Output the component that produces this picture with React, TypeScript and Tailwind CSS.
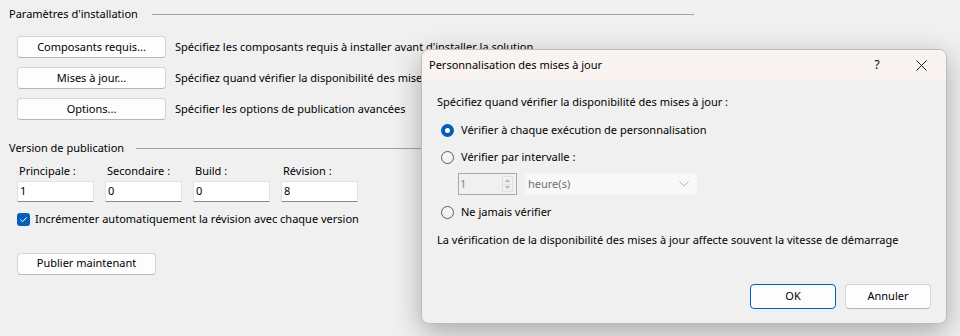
import React from 'react';

const font = { fontFamily: '"Segoe UI", "Noto Sans", "Open Sans", sans-serif' };

/**
 * 分组标题，带右侧横线
 */
function GroupHeader({ label, gap }: { label: string; gap: string }) {
  return (
    <div className="flex h-4 w-[685px] items-center">
      <span className="whitespace-nowrap">{label}</span>
      <div className={`h-px flex-1 bg-[#a3a3a3] ${gap}`}></div>
    </div>
  );
}

function WinButton({ label, width, accent = false }: { label: string; width: string; accent?: boolean }) {
  return (
    <button
      className={`flex h-[22px] ${width} items-center justify-center rounded-[4px] border bg-[#fdfdfd] ${
        accent ? 'border-[#005fb8]' : 'border-[#d4d4d4] border-b-[#b5b5b5]'
      }`}
    >
      {label}
    </button>
  );
}

function Radio({ checked }: { checked?: boolean }) {
  if (checked) {
    return (
      <span className="flex h-[13px] w-[13px] items-center justify-center rounded-full bg-[#005fb8]">
        <span className="h-[5px] w-[5px] rounded-full bg-white"></span>
      </span>
    );
  }
  return <span className="h-[13px] w-[13px] rounded-full border border-[#5d5d5d] bg-[#f3f3f3]"></span>;
}

export default function App() {
  const versions = [
    { label: 'Principale :', value: '1' },
    { label: 'Secondaire :', value: '0' },
    { label: 'Build :', value: '0' },
    { label: 'Révision :', value: '8' },
  ];

  const actions = [
    { label: 'Composants requis...', text: "Spécifiez les composants requis à installer avant d'installer la solution" },
    { label: 'Mises à jour...', text: 'Spécifiez quand vérifier la disponibilité des mises à jour' },
    { label: 'Options...', text: 'Spécifier les options de publication avancées' },
  ];

  return (
    <div className="relative h-[336px] w-[960px] overflow-hidden bg-[#f0f0f0] text-[11px] text-black" style={font}>
      {/* 背景页面 */}
      <div className="flex flex-col pl-[9px] pt-[6px]">
        <GroupHeader label="Paramètres d'installation" gap="ml-[14px]" />
        <div className="mt-[14px] flex flex-col gap-[9px] pl-[8px]">
          {actions.map((a) => (
            <div key={a.label} className="flex items-center">
              <WinButton label={a.label} width="w-[149px]" />
              <span className="ml-[9px] whitespace-nowrap">{a.text}</span>
            </div>
          ))}
        </div>

        <div className="mt-[20px]">
          <GroupHeader label="Version de publication" gap="ml-[12px]" />
        </div>
        <div className="mt-[7px] grid w-fit grid-cols-[77px_77px_77px_77px] gap-x-[11px] pl-[8px]">
          {versions.map((v) => (
            <div key={v.label} className="flex flex-col">
              <span className="h-4 pl-[2px] leading-4">{v.label}</span>
              <div className="mt-[2px] flex h-[21px] items-center border border-[#e3e3e3] border-b-[#8a8a8a] bg-white pl-[2px]">
                {v.value}
              </div>
            </div>
          ))}
        </div>
        <div className="mt-[9px] flex items-center pl-[8px]">
          <span className="flex h-[13px] w-[13px] items-center justify-center rounded-[3px] bg-[#005fb8]">
            <svg width="9" height="9" viewBox="0 0 9 9" fill="none">
              <path d="M1.5 4.7 L3.6 6.7 L7.6 2.4" stroke="white" strokeWidth="1" />
            </svg>
          </span>
          <span className="ml-[5px]">Incrémenter automatiquement la révision avec chaque version</span>
        </div>
        <div className="mt-[25px] pl-[8px]">
          <WinButton label="Publier maintenant" width="w-[139px]" />
        </div>
      </div>

      {/* 对话框 */}
      <div className="absolute left-[421px] top-[49px] flex h-[275px] w-[526px] flex-col overflow-hidden rounded-[8px] border border-[#bcbcbc] bg-[#f0f0f0] shadow-[0_8px_28px_rgba(0,0,0,0.3)]">
        <div className="flex h-[30px] items-center bg-[#f9f3f1] pl-[7px]">
          <span className="flex-1">Personnalisation des mises à jour</span>
          <span className="w-[10px] text-center text-[12px]">?</span>
          <svg className="ml-[34px] mr-[19px]" width="11" height="11" viewBox="0 0 11 11">
            <path d="M0.5 0.5 L10.5 10.5 M10.5 0.5 L0.5 10.5" stroke="#1a1a1a" strokeWidth="1" />
          </svg>
        </div>
        <div className="flex flex-1 flex-col pl-[15px] pr-[15px] pt-[14px]">
          <span className="h-4 leading-4">Spécifiez quand vérifier la disponibilité des mises à jour :</span>
          <div className="mt-[12px] flex h-4 items-center pl-[4px]">
            <Radio checked />
            <span className="ml-[7px]">Vérifier à chaque exécution de personnalisation</span>
          </div>
          <div className="mt-[11px] flex h-4 items-center pl-[4px]">
            <Radio />
            <span className="ml-[7px]">Vérifier par intervalle :</span>
          </div>
          <div className="mt-[8px] flex items-center pl-[21px]">
            <div className="flex h-[22px] w-[59px] items-center border border-[#a9a9a9] bg-[#f0f0f0] pl-[1px] pr-[3px] text-[#8a8a8a]">
              <span className="flex-1">1</span>
              <div className="flex h-[16px] w-[11px] flex-col border border-[#e0e0e0]">
                <div className="flex flex-1 items-center justify-center border-b border-[#e0e0e0]">
                  <svg width="5" height="3" viewBox="0 0 5 3">
                    <path d="M0 3 L2.5 0 L5 3 Z" fill="#b3b3b3" />
                  </svg>
                </div>
                <div className="flex flex-1 items-center justify-center">
                  <svg width="5" height="3" viewBox="0 0 5 3">
                    <path d="M0 0 L2.5 3 L5 0 Z" fill="#b3b3b3" />
                  </svg>
                </div>
              </div>
            </div>
            <div className="ml-[8px] flex h-[22px] w-[172px] items-center rounded-[2px] bg-[#f8f8f8] pl-[3px] pr-[8px] text-[#6f6f6f]">
              <span className="flex-1">heure(s)</span>
              <svg width="10" height="6" viewBox="0 0 10 6" fill="none">
                <path d="M0.5 0.5 L5 5 L9.5 0.5" stroke="#b5b5b5" strokeWidth="1" />
              </svg>
            </div>
          </div>
          <div className="mt-[9px] flex h-4 items-center pl-[4px]">
            <Radio />
            <span className="ml-[7px]">Ne jamais vérifier</span>
          </div>
          <span className="mt-[12px] h-4 whitespace-nowrap leading-4">
            La vérification de la disponibilité des mises à jour affecte souvent la vitesse de démarrage
          </span>
          <div className="mt-[36px] flex justify-end gap-[9px]">
            <button className="flex h-[25px] w-[86px] items-center justify-center rounded-[4px] border border-[#005fb8] bg-[#fdfdfd]">
              OK
            </button>
            <button className="flex h-[25px] w-[86px] items-center justify-center rounded-[4px] border border-[#d4d4d4] border-b-[#b5b5b5] bg-[#fdfdfd]">
              Annuler
            </button>
          </div>
        </div>
      </div>
    </div>
  );
}
